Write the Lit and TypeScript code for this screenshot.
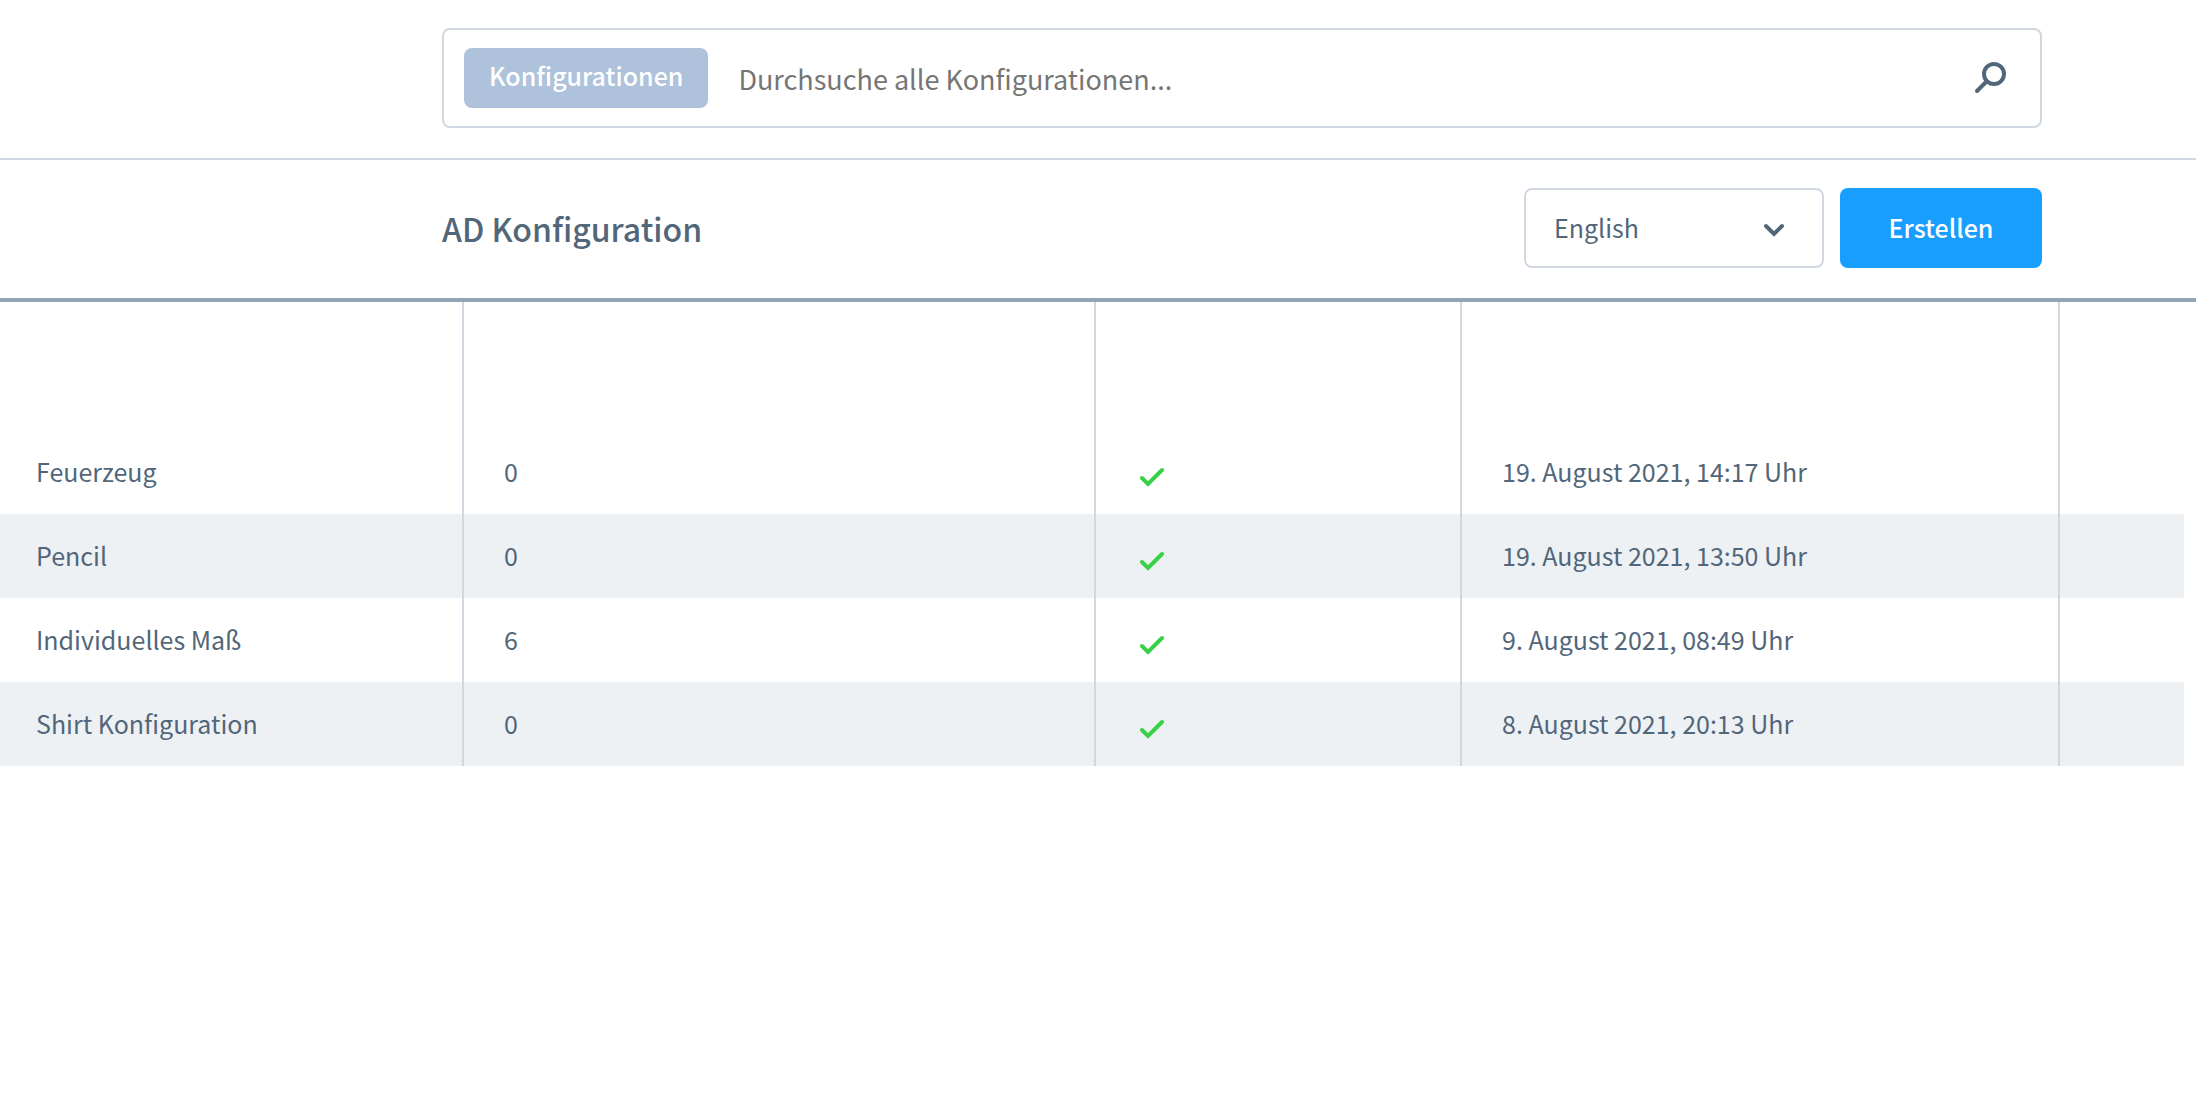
import { LitElement, css, html, svg } from "lit";
import { customElement, property, state } from "lit/decorators.js";

interface Configuration {
  name: string;
  count: number;
  active: boolean;
  created: string;
}

const CONFIGURATIONS: Configuration[] = [
  { name: "Feuerzeug", count: 0, active: true, created: "19. August 2021, 14:17 Uhr" },
  { name: "Pencil", count: 0, active: true, created: "19. August 2021, 13:50 Uhr" },
  { name: "Individuelles Maß", count: 6, active: true, created: "9. August 2021, 08:49 Uhr" },
  { name: "Shirt Konfiguration", count: 0, active: true, created: "8. August 2021, 20:13 Uhr" },
];

const checkmark = svg`<path d="M2 11 L8 17 L22 3" fill="none" stroke="#37d046"
  stroke-width="4" stroke-linecap="round" stroke-linejoin="miter" />`;

@customElement("search-bar")
export class SearchBar extends LitElement {
  static styles = css`
    :host {
      display: block;
      padding: 28px var(--gutter-right) 30px var(--gutter-left);
      border-bottom: 2px solid var(--line);
    }
    .box {
      display: flex;
      align-items: center;
      box-sizing: border-box;
      height: 100px;
      padding: 0 28px 0 20px;
      border: 2px solid var(--line);
      border-radius: 8px;
    }
    .type {
      height: 60px;
      padding: 0 25px 6px;
      border: 0;
      border-radius: 8px;
      background: #aec2db;
      color: #fff;
      font: 500 25px/54px var(--font);
    }
    .query {
      flex: 1;
      min-width: 0;
      height: 60px;
      margin: 2px 24px 0 30px;
      padding: 0;
      border: 0;
      outline: 0;
      background: none;
      color: var(--text);
      font: 400 27px/60px var(--font);
    }
    .query::placeholder {
      color: #757575;
      opacity: 1;
    }
    .submit {
      display: block;
      padding: 0;
      border: 0;
      background: none;
      color: var(--text);
    }
    .submit svg {
      display: block;
    }
  `;

  render() {
    return html`
      <form class="box" role="search" @submit=${(e: Event) => e.preventDefault()}>
        <button class="type" type="button">Konfigurationen</button>
        <input
          class="query"
          type="text"
          aria-label="Konfigurationen durchsuchen"
          placeholder="Durchsuche alle Konfigurationen..."
        />
        <button class="submit" type="submit" aria-label="Suchen">
          <svg width="40" height="40" viewBox="0 0 40 40" fill="none" stroke="currentColor">
            <circle cx="22" cy="16" r="10" stroke-width="4" />
            <path d="M14.5 23.5 L5 33" stroke-width="4" stroke-linecap="round" />
          </svg>
        </button>
      </form>
    `;
  }
}

@customElement("page-toolbar")
export class PageToolbar extends LitElement {
  @state() private language = "English";

  static styles = css`
    :host {
      display: flex;
      align-items: center;
      gap: 16px;
      padding: 28px var(--gutter-right) 30px var(--gutter-left);
      border-bottom: 4px solid #92a5b5;
    }
    .title {
      flex: 1;
      margin: 0;
      color: var(--text);
      font: 500 32px/80px var(--font);
    }
    .language {
      display: grid;
      align-items: center;
      width: 300px;
    }
    .language select,
    .language svg {
      grid-area: 1 / 1;
    }
    .language select {
      appearance: none;
      box-sizing: border-box;
      width: 100%;
      height: 80px;
      padding: 0 64px 2px 28px;
      border: 2px solid var(--line);
      border-radius: 8px;
      background: #fff;
      color: var(--text);
      font: 400 25px/74px var(--font);
    }
    .language svg {
      justify-self: end;
      margin-right: 38px;
      pointer-events: none;
    }
    .create {
      width: 202px;
      height: 80px;
      padding: 0 0 2px;
      border: 0;
      border-radius: 8px;
      background: #189eff;
      color: #fff;
      font: 500 25px/78px var(--font);
    }
  `;

  render() {
    return html`
      <h1 class="title">AD Konfiguration</h1>
      <div class="language">
        <select
          aria-label="Sprache"
          @change=${(e: Event) => (this.language = (e.target as HTMLSelectElement).value)}
        >
          ${["English", "Deutsch"].map(
            (name) => html`<option ?selected=${name === this.language}>${name}</option>`
          )}
        </select>
        <svg width="24" height="24" viewBox="0 0 24 24" fill="none" stroke="#52667a">
          <path d="M4 10 L12 18 L20 10" stroke-width="4" stroke-linecap="round" />
        </svg>
      </div>
      <button class="create" type="button">Erstellen</button>
    `;
  }
}

@customElement("config-table")
export class ConfigTable extends LitElement {
  @property({ attribute: false }) rows: Configuration[] = [];

  static styles = css`
    :host {
      display: block;
      padding-right: 12px;
    }
    .grid {
      width: 100%;
      table-layout: fixed;
      border-collapse: separate;
      border-spacing: 0;
      color: var(--text);
      font: 400 25px/36px var(--font);
    }
    .col-name {
      width: 464px;
    }
    .col-active {
      width: 366px;
    }
    .col-created {
      width: 598px;
    }
    .col-actions {
      width: 124px;
    }
    th,
    td {
      box-sizing: border-box;
      padding: 0 40px 2px;
      border-right: 2px solid var(--line);
      text-align: left;
      font-weight: 400;
    }
    th:first-child,
    td:first-child {
      padding-left: 36px;
    }
    th:last-child,
    td:last-child {
      border-right: 0;
    }
    th {
      height: 128px;
    }
    td {
      height: 84px;
    }
    tbody tr:nth-child(even) {
      background: #edf1f4;
    }
    .check {
      display: block;
      margin: 12px 0 0 4px;
    }
  `;

  render() {
    return html`
      <table class="grid">
        <colgroup>
          <col class="col-name" />
          <col />
          <col class="col-active" />
          <col class="col-created" />
          <col class="col-actions" />
        </colgroup>
        <thead>
          <tr>
            <th scope="col" aria-label="Name"></th>
            <th scope="col" aria-label="Anzahl"></th>
            <th scope="col" aria-label="Aktiv"></th>
            <th scope="col" aria-label="Erstellt am"></th>
            <th scope="col" aria-label="Aktionen"></th>
          </tr>
        </thead>
        <tbody>
          ${this.rows.map(
            (row) => html`
              <tr>
                <td>${row.name}</td>
                <td>${row.count}</td>
                <td>
                  ${row.active
                    ? html`<svg class="check" role="img" aria-label="Aktiv"
                        width="24" height="20" viewBox="0 0 24 20">${checkmark}</svg>`
                    : null}
                </td>
                <td>${row.created}</td>
                <td></td>
              </tr>
            `
          )}
        </tbody>
      </table>
    `;
  }
}

@customElement("app-root")
export class AppRoot extends LitElement {
  static styles = css`
    :host {
      --font: "Noto Sans CJK SC", "Open Sans", sans-serif;
      --text: #52667a;
      --line: #cfd8e0;
      --gutter-left: 442px;
      --gutter-right: 154px;
      display: block;
      min-height: 100vh;
      background: #fff;
    }
  `;

  render() {
    return html`
      <search-bar></search-bar>
      <page-toolbar></page-toolbar>
      <config-table .rows=${CONFIGURATIONS}></config-table>
    `;
  }
}
